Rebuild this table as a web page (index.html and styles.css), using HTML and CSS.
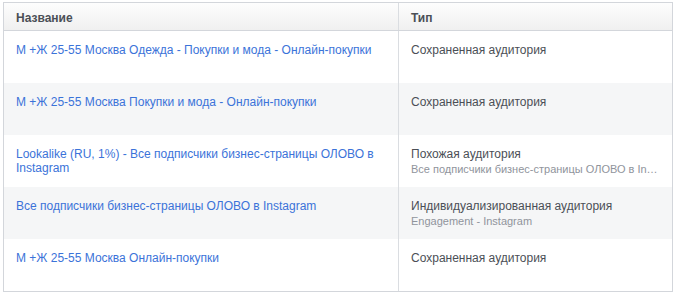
FILE: index.html
```html
<!DOCTYPE html>
<html lang="ru">
<head>
<meta charset="utf-8">
<title>Аудитории</title>
<link rel="stylesheet" href="styles.css">
</head>
<body>
<div class="table">
  <div class="row head">
    <div class="cell name">Название</div>
    <div class="cell type">Тип</div>
  </div>
  <div class="row">
    <div class="cell name"><a class="link" href="#">М +Ж 25-55 Москва Одежда - Покупки и мода - Онлайн-покупки</a></div>
    <div class="cell type"><div class="main">Сохраненная аудитория</div></div>
  </div>
  <div class="row alt">
    <div class="cell name"><a class="link" href="#">М +Ж 25-55 Москва Покупки и мода - Онлайн-покупки</a></div>
    <div class="cell type"><div class="main">Сохраненная аудитория</div></div>
  </div>
  <div class="row">
    <div class="cell name"><a class="link" href="#">Lookalike (RU, 1%) - Все подписчики бизнес-страницы ОЛОВО в Instagram</a></div>
    <div class="cell type"><div class="main">Похожая аудитория</div><div class="sub">Все подписчики бизнес-страницы ОЛОВО в Instagram</div></div>
  </div>
  <div class="row alt">
    <div class="cell name"><a class="link" href="#">Все подписчики бизнес-страницы ОЛОВО в Instagram</a></div>
    <div class="cell type"><div class="main">Индивидуализированная аудитория</div><div class="sub">Engagement - Instagram</div></div>
  </div>
  <div class="row">
    <div class="cell name"><a class="link" href="#">М +Ж 25-55 Москва Онлайн-покупки</a></div>
    <div class="cell type"><div class="main">Сохраненная аудитория</div></div>
  </div>
</div>
</body>
</html>
```
FILE: styles.css
```css
* { box-sizing: border-box; }
html, body { margin: 0; background: #fff; }
body {
  padding: 2px 0 0 3px;
  font-family: "Liberation Sans", Arial, sans-serif;
  font-size: 12px;
  line-height: 14px;
  color: #4b4f56;
}
.table {
  width: 670px;
  border: 1px solid #d3d6db;
}
.row {
  display: grid;
  grid-template-columns: 395px 1fr;
  height: 52px;
  background: #fff;
}
.row.alt { background: #f5f6f7; }
.row.head {
  height: 28px;
  background: linear-gradient(#fdfdfd, #f0f0f0);
  border-bottom: 1px solid #d3d6db;
  font-weight: bold;
  color: #4b4f56;
}
.cell {
  padding: 12px 14px 0 12px;
  min-width: 0;
}
.head .cell { padding-top: 8px; }
.cell.name { border-right: 1px solid #dadde1; }
.link {
  color: #3b73d9;
  text-decoration: none;
}
.main { color: #4b4f56; }
.sub {
  margin-top: 1px;
  color: #90949c;
  font-size: 11px;
  white-space: nowrap;
  overflow: hidden;
  text-overflow: ellipsis;
}
```
